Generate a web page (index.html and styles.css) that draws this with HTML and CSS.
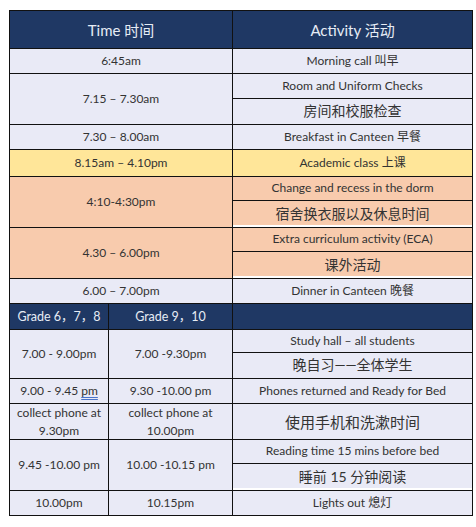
FILE: index.html
```html
<!DOCTYPE html>
<html lang="zh">
<head>
<meta charset="utf-8">
<title>Schedule</title>
<link rel="stylesheet" href="styles.css">
</head>
<body>
<table class="sched">
  <colgroup>
    <col class="c1"><col class="c2"><col class="c3">
  </colgroup>
  <tr class="head h38">
    <th colspan="2">Time 时间</th>
    <th>Activity 活动</th>
  </tr>
  <tr class="lt h25">
    <td colspan="2">6:45am</td>
    <td>Morning call 叫早</td>
  </tr>
  <tr class="lt h25">
    <td colspan="2" rowspan="2">7.15 – 7.30am</td>
    <td>Room and Uniform Checks</td>
  </tr>
  <tr class="lt h26">
    <td class="zh">房间和校服检查</td>
  </tr>
  <tr class="lt h25">
    <td colspan="2">7.30 – 8.00am</td>
    <td>Breakfast in Canteen 早餐</td>
  </tr>
  <tr class="yl h27">
    <td colspan="2">8.15am – 4.10pm</td>
    <td>Academic class 上课</td>
  </tr>
  <tr class="or h24">
    <td colspan="2" rowspan="2">4:10-4:30pm</td>
    <td>Change and recess in the dorm</td>
  </tr>
  <tr class="or h27">
    <td class="zh gap">宿舍换衣服以及休息时间</td>
  </tr>
  <tr class="or h24">
    <td colspan="2" rowspan="2">4.30 – 6.00pm</td>
    <td>Extra curriculum activity (ECA)</td>
  </tr>
  <tr class="or h27">
    <td class="zh gap">课外活动</td>
  </tr>
  <tr class="lt h25">
    <td colspan="2">6.00 – 7.00pm</td>
    <td>Dinner in Canteen 晚餐</td>
  </tr>
  <tr class="head grade h26">
    <td>Grade 6，7，8</td>
    <td>Grade 9，10</td>
    <td></td>
  </tr>
  <tr class="lt h23">
    <td rowspan="2">7.00 - 9.00pm</td>
    <td rowspan="2">7.00 -9.30pm</td>
    <td>Study hall – all students</td>
  </tr>
  <tr class="lt h26">
    <td class="zh">晚自习——全体学生</td>
  </tr>
  <tr class="lt h25">
    <td>9.00 - 9.45 <span class="spell">pm </span></td>
    <td>9.30 -10.00 pm</td>
    <td>Phones returned and Ready for Bed</td>
  </tr>
  <tr class="lt h36">
    <td class="two">collect phone at<br>9.30pm</td>
    <td class="two">collect phone at<br>10.00pm</td>
    <td class="zh big">使用手机和洗漱时间</td>
  </tr>
  <tr class="lt h24">
    <td rowspan="2">9.45 -10.00 pm</td>
    <td rowspan="2">10.00 -10.15 pm</td>
    <td>Reading time 15 mins before bed</td>
  </tr>
  <tr class="lt h27">
    <td class="zh gap">睡前 15 分钟阅读</td>
  </tr>
  <tr class="lt h25">
    <td>10.00pm</td>
    <td>10.15pm</td>
    <td>Lights out 熄灯</td>
  </tr>
</table>
</body>
</html>
```
FILE: styles.css
```css
html, body {
  margin: 0;
  padding: 0;
  background: #ffffff;
}
body {
  font-family: Lato, "Noto Sans CJK SC", sans-serif;
  color: #333333;
}
.sched {
  margin: 10px 0 0 9px;
  border-collapse: collapse;
  table-layout: fixed;
  width: 463px;
}
.c1 { width: 99px; }
.c2 { width: 124px; }
.c3 { width: 240px; }
.sched th, .sched td {
  border: 1px solid #111111;
  padding: 0 2px;
  text-align: center;
  vertical-align: middle;
  font-size: 12px;
  font-weight: normal;
  line-height: 1.2;
  white-space: nowrap;
}
.head th, .head td {
  background: #1f3864;
  color: #e6ecf5;
}
.head th {
  font-size: 15px;
}
.grade td {
  font-size: 12.5px;
}
.lt td { background: #e9eaf6; }
.yl td { background: #ffe699; }
.or td { background: #f8cbad; }
.zh { font-size: 14px !important; }
.big { font-size: 15px !important; }
.gap { box-shadow: inset 0 -2px 0 #ffffff; }
.two { line-height: 1.45 !important; }
.spell {
  text-decoration: underline double #4a74c9;
  text-underline-offset: 2px;
}
.h38 { height: 38px; }
.h36 { height: 36px; }
.h27 { height: 27px; }
.h26 { height: 26px; }
.h25 { height: 25px; }
.h24 { height: 24px; }
.h23 { height: 23px; }
```
